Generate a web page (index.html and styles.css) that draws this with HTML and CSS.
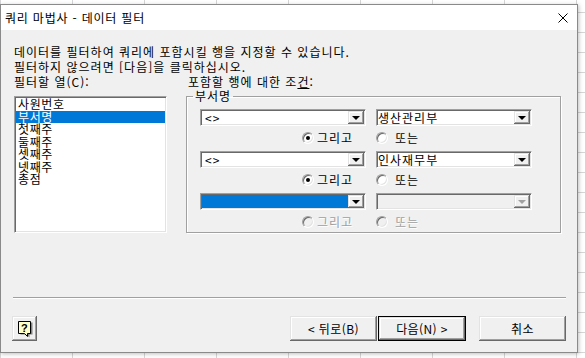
FILE: index.html
```html
<!DOCTYPE html>
<html lang="ko">
<head>
<meta charset="utf-8">
<title>쿼리 마법사 - 데이터 필터</title>
<link rel="stylesheet" href="styles.css">
</head>
<body>
<div class="dialog">
  <div class="titlebar">
    <span class="title">쿼리 마법사 - 데이터 필터</span>
    <svg class="close" width="10" height="10" viewBox="0 0 10 10"><path d="M0.5 0.5 L9.5 9.5 M9.5 0.5 L0.5 9.5" stroke="#000" stroke-width="1" fill="none"/></svg>
  </div>
  <div class="content">
    <p class="intro">데이터를 필터하여 쿼리에 포함시킬 행을 지정할 수 있습니다.<br>필터하지 않으려면 [다음]을 클릭하십시오.</p>
    <div class="main">
      <div class="col-left">
        <div class="label">필터할 열(C):</div>
        <ul class="list">
          <li>사원번호</li>
          <li class="selected">부서명</li>
          <li>첫째주</li>
          <li>둘째주</li>
          <li>셋째주</li>
          <li>넷째주</li>
          <li>총점</li>
        </ul>
      </div>
      <div class="col-right">
        <div class="label label-right">포함할 행에 대한 조<u>건</u>:</div>
        <fieldset class="group">
          <legend>부서명</legend>
          <div class="cond-grid">
            <div class="combo"><span class="combo-text">&lt;&gt;</span><span class="combo-btn"><i class="tri"></i></span></div>
            <div class="combo"><span class="combo-text tight">생산관리부</span><span class="combo-btn"><i class="tri"></i></span></div>
            <label class="opt opt-and"><span class="radio checked"></span><span>그리고</span></label>
            <label class="opt opt-or"><span class="radio"></span><span>또는</span></label>

            <div class="combo"><span class="combo-text">&lt;&gt;</span><span class="combo-btn"><i class="tri"></i></span></div>
            <div class="combo"><span class="combo-text tight">인사재무부</span><span class="combo-btn"><i class="tri"></i></span></div>
            <label class="opt opt-and"><span class="radio checked"></span><span>그리고</span></label>
            <label class="opt opt-or"><span class="radio"></span><span>또는</span></label>

            <div class="combo"><span class="combo-text highlight"></span><span class="combo-btn"><i class="tri"></i></span></div>
            <div class="combo disabled"><span class="combo-text"></span><span class="combo-btn"><i class="tri"></i></span></div>
            <label class="opt opt-and disabled"><span class="radio"></span><span>그리고</span></label>
            <label class="opt opt-or disabled"><span class="radio"></span><span>또는</span></label>
          </div>
        </fieldset>
      </div>
    </div>
    <div class="separator"></div>
    <div class="footer">
      <button class="btn help" type="button" aria-label="도움말">
        <svg width="16" height="18" viewBox="0 0 16 18">
          <path d="M2.5 1.5 H14.5 V13.5 H11.5 V16.5 L8.5 13.5 H2.5 Z" fill="#808080" transform="translate(1,1)"/>
          <path d="M1.5 1.5 H13.5 V13.5 H10.5 V16.5 L7.5 13.5 H1.5 Z" fill="#ffffc8" stroke="#000" stroke-width="1"/>
          <text x="7.5" y="11.5" text-anchor="middle" font-family="Liberation Sans, sans-serif" font-weight="bold" font-size="11" fill="#000">?</text>
        </svg>
      </button>
      <div class="nav">
        <button class="btn" type="button">&lt; 뒤로(B)</button>
        <button class="btn default" type="button">다음(N) &gt;</button>
        <button class="btn cancel" type="button">취소</button>
      </div>
    </div>
  </div>
</div>
</body>
</html>
```

FILE: styles.css
```css
* { box-sizing: border-box; }

html, body { margin: 0; padding: 0; }

body {
  width: 585px;
  height: 358px;
  overflow: hidden;
  background-color: #ffffff;
  background-image:
    linear-gradient(to right, #d6d6d6 1px, transparent 1px),
    linear-gradient(to bottom, #d6d6d6 1px, transparent 1px);
  background-size: 72px 20px, 72px 20px;
  background-position: 0 0, 0 12px;
  font-family: "Noto Sans CJK KR", "Noto Sans", sans-serif;
  font-size: 12px;
  letter-spacing: 1px;
  color: #000;
}

.dialog {
  margin-top: 4px;
  width: 578px;
  height: 349px;
  border: 1px solid #8a8a8a;
  background: #f0f0f0;
  display: flex;
  flex-direction: column;
  box-shadow: 1px 1px 4px rgba(0, 0, 0, 0.25);
}

.titlebar {
  height: 25px;
  flex: none;
  background: #ffffff;
  display: flex;
  align-items: center;
  padding-left: 4px;
  padding-right: 9px;
}

.title {
  flex: 1;
  font-size: 12px;
  line-height: 14px;
  letter-spacing: 0.8px;
}

.close { display: block; }

.content {
  flex: 1;
  padding: 0 11px 0 12px;
  display: flex;
  flex-direction: column;
}

.intro {
  margin: 0 0 0 1px;
  padding-top: 14px;
  line-height: 15px;
}

.main {
  display: flex;
  gap: 19px;
  margin-left: 1px;
}

.col-left { width: 153px; flex: none; }
.col-right { width: 375px; flex: none; }

.label {
  line-height: 15px;
  height: 15px;
  white-space: nowrap;
}

.label-right { padding-left: 2px; }

.list {
  list-style: none;
  margin: 7px 0 0 0;
  height: 137px;
  background: #fff;
  border: 1px solid;
  border-color: #a0a0a0 #ffffff #ffffff #a0a0a0;
  box-shadow: inset 1px 1px 0 #696969, inset -1px -1px 0 #e3e3e3;
  padding: 1px;
}

.list li {
  height: 12.5px;
  line-height: 12.5px;
  padding-left: 2px;
  white-space: nowrap;
  letter-spacing: 0.6px;
}

.list li.selected {
  background: #0078d7;
  color: #fff;
}

.group {
  margin: 1px 0 0 0;
  padding: 7px 0 0 13px;
  height: 143px;
  border: 1px solid #a0a0a0;
  box-shadow: 1px 1px 0 #fff, inset 1px 1px 0 #fff;
  min-inline-size: 0;
}

.group legend {
  margin-left: -7px;
  padding: 0 2px;
  line-height: 12px;
  height: 12px;
}

.cond-grid {
  display: grid;
  grid-template-columns: 166px 156px;
  grid-template-rows: 17px 25px 17px 25px 17px 21px;
  column-gap: 10px;
}

.combo {
  display: flex;
  height: 17px;
  background: #fff;
  border: 1px solid;
  border-color: #a0a0a0 #ffffff #ffffff #a0a0a0;
  box-shadow: inset 1px 1px 0 #696969, inset -1px -1px 0 #e3e3e3;
  padding: 1px;
}

.combo-text {
  flex: 1;
  height: 13px;
  line-height: 13px;
  padding-left: 3px;
  white-space: nowrap;
}

.combo-text.tight { padding-left: 0; }

.combo-text.highlight { background: #0078d7; }

.combo-btn {
  width: 16px;
  height: 13px;
  flex: none;
  background: #f0f0f0;
  box-shadow: inset -1px -1px 0 #696969, inset 1px 1px 0 #e3e3e3, inset -2px -2px 0 #a0a0a0, inset 2px 2px 0 #ffffff;
  display: flex;
  align-items: center;
  justify-content: center;
}

.tri {
  display: block;
  width: 0;
  height: 0;
  border-left: 4px solid transparent;
  border-right: 4px solid transparent;
  border-top: 4px solid #000;
}

.combo.disabled { background: #f0f0f0; }
.combo.disabled .tri { border-top-color: #a0a0a0; }

.opt {
  display: flex;
  align-items: center;
  align-self: start;
  margin-top: 6px;
  height: 12px;
  line-height: 12px;
}

.opt-and {
  justify-self: end;
  margin-right: 13px;
  gap: 3px;
}

.opt-or {
  justify-self: start;
  gap: 7px;
}

.radio {
  position: relative;
  width: 12px;
  height: 12px;
  flex: none;
  border-radius: 50%;
  background: #fff;
  border: 1px solid;
  border-color: #a0a0a0 #ffffff #ffffff #a0a0a0;
  box-shadow: inset 1px 1px 0 #696969, inset -1px -1px 0 #e3e3e3;
}

.radio.checked::after {
  content: "";
  position: absolute;
  left: 3px;
  top: 3px;
  width: 4px;
  height: 4px;
  border-radius: 50%;
  background: #000;
}

.opt.disabled { color: #a0a0a0; text-shadow: 1px 1px 0 #fff; }
.opt.disabled .radio { background: #f0f0f0; }

.separator {
  margin-top: 64px;
  height: 2px;
  border-top: 1px solid #a0a0a0;
  border-bottom: 1px solid #ffffff;
}

.footer {
  display: flex;
  align-items: flex-start;
  margin-top: 17px;
}

.nav {
  margin-left: auto;
  display: flex;
}

.btn {
  height: 25px;
  width: 87px;
  padding: 0;
  margin: 0;
  border: none;
  background: #f0f0f0;
  font-family: "Noto Sans CJK KR", "Noto Sans", sans-serif;
  font-size: 12px;
  letter-spacing: 0.4px;
  color: #000;
  box-shadow: inset -1px -1px 0 #696969, inset 1px 1px 0 #e3e3e3, inset -2px -2px 0 #a0a0a0, inset 2px 2px 0 #ffffff;
}

.btn.default {
  width: 88px;
  margin-left: 1px;
  border: 1px solid #000;
}

.btn.cancel { margin-left: 13px; }

.btn.help {
  width: 25px;
  margin-left: -1px;
  display: flex;
  align-items: center;
  justify-content: center;
  padding: 1px 0 0 1px;
}

.btn.help svg { display: block; }
```
